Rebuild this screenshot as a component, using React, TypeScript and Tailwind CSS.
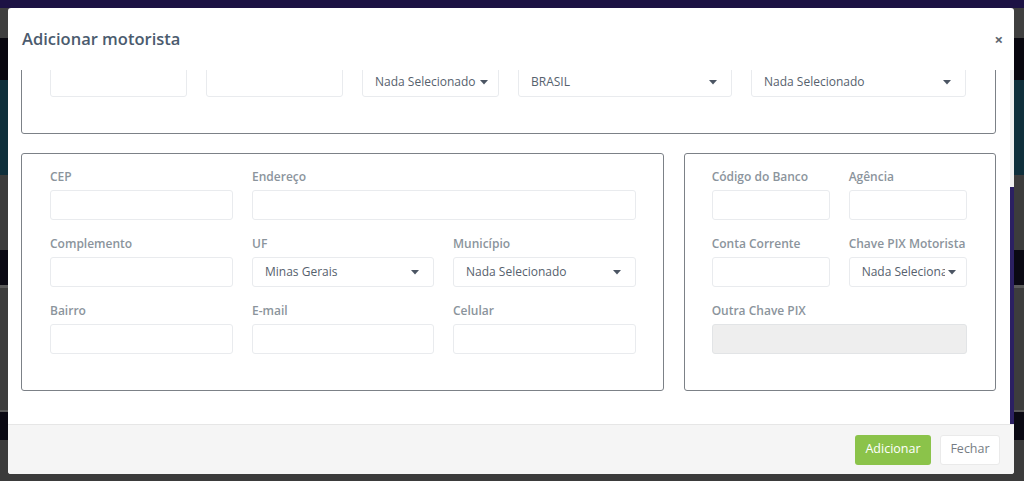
import React from 'react';

const Caret: React.FC = () => (
    <svg width="8" height="5" viewBox="0 0 8 5" className="shrink-0"><path d="M0 0h8L4 4.5z" fill="#4b5563" /></svg>
);

const Field: React.FC<{label: string, w: string, children?: React.ReactNode}> = ({ label, w, children }) => (
    <div className={`${w} shrink-0`}>
        <div className="h-[16px] text-[12px] font-semibold text-[#8b949c] leading-[16px] mb-[5px] whitespace-nowrap">{label}</div>
        {children ?? <div className="h-[30px] w-full rounded-[3px] border border-[#e9ebee] bg-white" />}
    </div>
);

const Select: React.FC<{value: string, tight?: boolean}> = ({ value, tight }) => (
    <div className={`h-[30px] w-full rounded-[3px] border border-[#e9ebee] bg-white flex items-center pl-[12px] ${tight ? 'pr-[10px] gap-[3px]' : 'pr-[14px] gap-[6px]'} text-[12px] text-[#56616d]`}>
        <span className="flex-1 overflow-hidden whitespace-nowrap">{value}</span>
        <Caret />
    </div>
);

const strips = [
    ['h-[8px]', 'bg-[#1c1244]'],
    ['h-[30px]', 'bg-[#3f3f3f]'],
    ['h-[42px]', 'bg-[#08070f]'],
    ['h-[95px]', 'bg-[#0f2f3b]'],
    ['h-[75px]', 'bg-[#3c3c3c]'],
    ['h-[35px]', 'bg-[#0a0913]'],
    ['h-[3px]', 'bg-[#5a5a5a]'],
    ['h-[122px]', 'bg-[#3d3d3d]'],
    ['h-[2px]', 'bg-[#5a5a5a]'],
    ['h-[28px]', 'bg-[#0a0913]'],
    ['h-[41px]', 'bg-[#3b3b3b]'],
];

const App: React.FC = () => {
    return (
        <div className="relative w-[1024px] h-[481px] overflow-hidden" style={{ fontFamily: '"Open Sans", "Liberation Sans", sans-serif' }}>
            <div className="flex flex-col">
                {strips.map(([h, bg], i) => <div key={i} className={`${h} ${bg}`} />)}
            </div>

            <div className="absolute left-[8px] top-[8px] w-[1006px] h-[466px] bg-white rounded-[3px] flex flex-col overflow-hidden">
                <div className="h-[62px] shrink-0 flex items-center justify-between pl-[14px] pr-[11px]">
                    <h2 className="text-[16.5px] font-semibold text-[#4b5b6e]">Adicionar motorista</h2>
                    <button className="text-[15px] font-bold text-[#5b6470] leading-none">×</button>
                </div>

                <div className="h-[354px] shrink-0 flex">
                    <div className="flex-1 overflow-hidden pl-[13px] pr-[14px]">
                        <div className="-mt-[30px]">
                            <div className="border border-[#7c8187] rounded-[3px] pt-[26px] pb-[36px] pl-[28px] flex gap-[19px]">
                                <div className="w-[137px] h-[30px] rounded-[3px] border border-[#e9ebee]" />
                                <div className="w-[137px] h-[30px] rounded-[3px] border border-[#e9ebee]" />
                                <div className="w-[137px]"><Select value="Nada Selecionado" tight /></div>
                                <div className="w-[214px]"><Select value="BRASIL" /></div>
                                <div className="w-[215px]"><Select value="Nada Selecionado" /></div>
                            </div>

                            <div className="flex gap-[20px] mt-[19px]">
                                <div className="w-[644px] h-[238px] border border-[#7c8187] rounded-[3px] pt-[15px] pl-[28px] flex flex-col gap-[16px]">
                                    <div className="flex gap-[19px]">
                                        <Field label="CEP" w="w-[183px]" />
                                        <Field label="Endereço" w="w-[384px]" />
                                    </div>
                                    <div className="flex gap-[19px]">
                                        <Field label="Complemento" w="w-[183px]" />
                                        <Field label="UF" w="w-[182px]"><Select value="Minas Gerais" /></Field>
                                        <Field label="Município" w="w-[183px]"><Select value="Nada Selecionado" /></Field>
                                    </div>
                                    <div className="flex gap-[19px]">
                                        <Field label="Bairro" w="w-[183px]" />
                                        <Field label="E-mail" w="w-[182px]" />
                                        <Field label="Celular" w="w-[183px]" />
                                    </div>
                                </div>

                                <div className="w-[313px] h-[238px] border border-[#7c8187] rounded-[3px] pt-[15px] pl-[27px] flex flex-col gap-[16px]">
                                    <div className="flex gap-[19px]">
                                        <Field label="Código do Banco" w="w-[118px]" />
                                        <Field label="Agência" w="w-[118px]" />
                                    </div>
                                    <div className="flex gap-[19px]">
                                        <Field label="Conta Corrente" w="w-[118px]" />
                                        <Field label="Chave PIX Motorista" w="w-[118px]"><Select value="Nada Selecionado" tight /></Field>
                                    </div>
                                    <div className="flex">
                                        <Field label="Outra Chave PIX" w="w-[255px]">
                                            <div className="h-[30px] w-full rounded-[3px] border border-[#e2e4e6] bg-[#eeeeee]" />
                                        </Field>
                                    </div>
                                </div>
                            </div>
                        </div>
                    </div>
                    <div className="w-[4px] flex flex-col">
                        <div className="h-[117px] bg-[#f0f0f0]" />
                        <div className="flex-1 bg-[#2b2062]" />
                    </div>
                </div>

                <div className="flex-1 bg-[#f5f5f5] border-t border-[#e6e6e6] flex items-center justify-end gap-[9px] pr-[14px]">
                    <button className="h-[30px] w-[76px] rounded-[3px] bg-[#8bc34a] text-white text-[12.5px]">Adicionar</button>
                    <button className="h-[30px] w-[60px] rounded-[3px] bg-white border border-[#eaeaea] text-[#777d84] text-[12.5px]">Fechar</button>
                </div>
            </div>
        </div>
    );
};

export default App;
